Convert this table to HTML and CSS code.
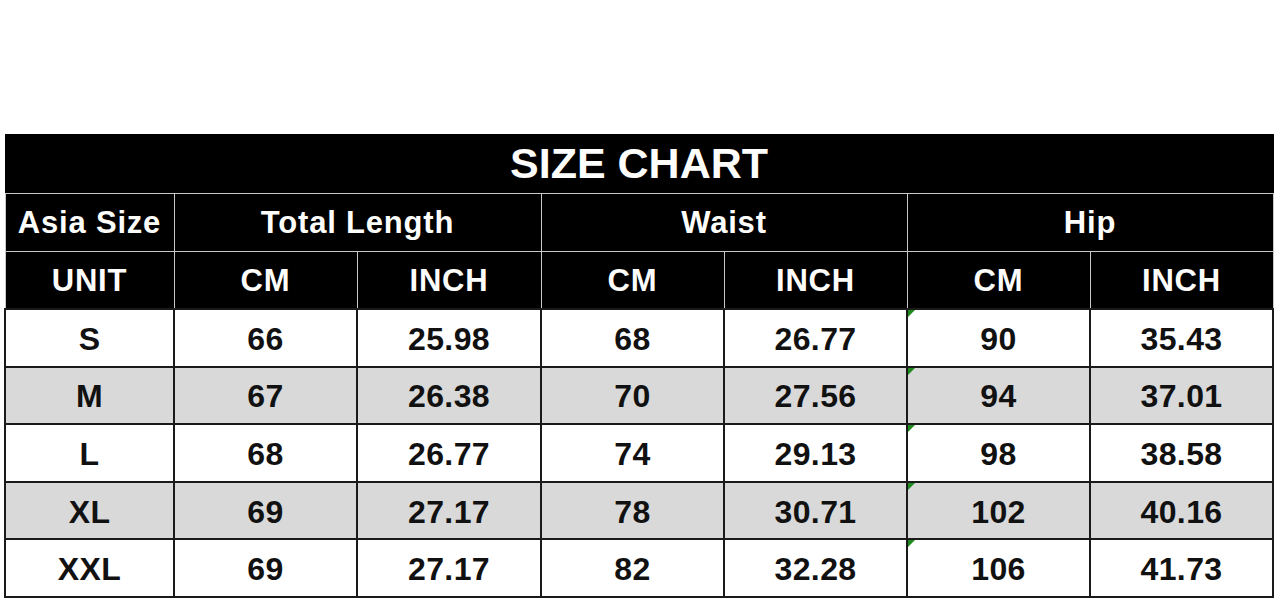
FILE: index.html
```html
<!DOCTYPE html>
<html>
<head>
<meta charset="utf-8">
<link rel="stylesheet" href="styles.css">
</head>
<body>
<div class="page">
  <table class="chart">
    <colgroup>
      <col class="c1"><col class="c2"><col class="c3"><col class="c4"><col class="c5"><col class="c6"><col class="c7">
    </colgroup>
    <thead>
      <tr class="title-row"><th colspan="7" class="title">SIZE CHART</th></tr>
      <tr class="head-row">
        <th>Asia Size</th>
        <th colspan="2">Total Length</th>
        <th colspan="2">Waist</th>
        <th colspan="2">Hip</th>
      </tr>
      <tr class="head-row">
        <th>UNIT</th>
        <th>CM</th><th>INCH</th>
        <th>CM</th><th>INCH</th>
        <th>CM</th><th>INCH</th>
      </tr>
    </thead>
    <tbody>
      <tr class="r1"><td>S</td><td>66</td><td>25.98</td><td>68</td><td>26.77</td><td class="flag">90</td><td>35.43</td></tr>
      <tr class="r2 alt"><td>M</td><td>67</td><td>26.38</td><td>70</td><td>27.56</td><td class="flag">94</td><td>37.01</td></tr>
      <tr class="r3"><td>L</td><td>68</td><td>26.77</td><td>74</td><td>29.13</td><td class="flag">98</td><td>38.58</td></tr>
      <tr class="r4 alt"><td>XL</td><td>69</td><td>27.17</td><td>78</td><td>30.71</td><td class="flag">102</td><td>40.16</td></tr>
      <tr class="r5"><td>XXL</td><td>69</td><td>27.17</td><td>82</td><td>32.28</td><td class="flag">106</td><td>41.73</td></tr>
    </tbody>
  </table>
</div>
</body>
</html>
```

FILE: styles.css
```css
html, body {
  margin: 0;
  padding: 0;
  background: #ffffff;
}

.page {
  padding-top: 134px;
  padding-left: 4px;
  font-family: "Liberation Sans", Arial, sans-serif;
}

.chart {
  table-layout: fixed;
  border-collapse: collapse;
  width: 1268px;
}

.c1 { width: 169px; }
.c2 { width: 183px; }
.c3 { width: 184px; }
.c4 { width: 183px; }
.c5 { width: 183px; }
.c6 { width: 183px; }
.c7 { width: 183px; }

.chart th {
  background: #000000;
  color: #fdfdfb;
  font-weight: bold;
  font-size: 31px;
  border: 1px solid #c8c8c8;
  padding: 2px 0 0 0;
  text-align: center;
  vertical-align: middle;
  letter-spacing: 0.8px;
}

.chart th.title {
  font-size: 43px;
  height: 56px;
  padding: 0 0 2px 0;
  border-top: 1px solid #000;
  border-left: 1px solid #000;
  border-right: 1px solid #000;
  letter-spacing: 0;
}

.head-row th {
  height: 54.5px;
}

.chart td {
  position: relative;
  background: #ffffff;
  color: #111111;
  font-weight: bold;
  font-size: 32px;
  letter-spacing: 0.4px;
  text-align: center;
  vertical-align: middle;
  border: 2px solid #1a1a1a;
  padding: 3px 0 0 0;
  height: 52.6px;
}

.chart tr.alt td {
  background: #d9d9d9;
}

.chart td.flag::before {
  content: "";
  position: absolute;
  left: 0;
  top: 0;
  width: 0;
  height: 0;
  border-top: 7px solid #1f8a1f;
  border-right: 7px solid transparent;
}
```
